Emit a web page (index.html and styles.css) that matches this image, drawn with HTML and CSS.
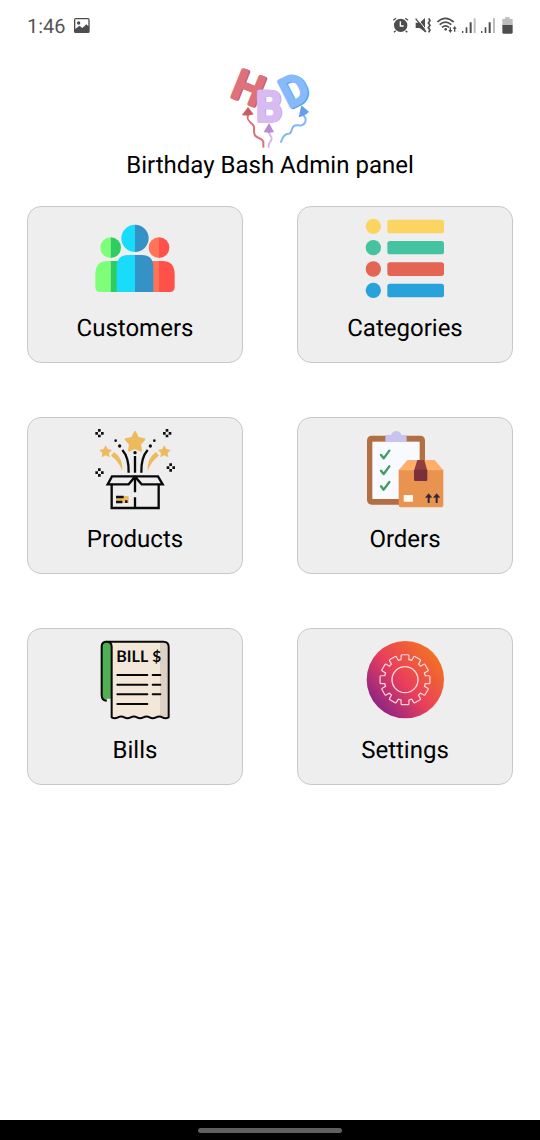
FILE: index.html
```html
<!DOCTYPE html>
<html lang="en">

<head>
    <meta charset="UTF-8">
    <meta name="viewport" content="width=device-width, initial-scale=1.0">
    <title>Birthday Bash Admin panel</title>
    <link rel="stylesheet" href="styles.css">
</head>

<body>

    <div class="status-bar">
        <span class="time">1:46</span>
        <svg class="status-icon" width="17" height="18" viewBox="188 36 51 54">
            <path fill-rule="evenodd" d="M193 39h37q5 0 5 5v36q0 4-5 4h-37q-5 0-5-4V44q0-5 5-5zM192 43v29l12-10 9 7 12-11 6 6V43zM202 49a5 5 0 1 1 0 10 5 5 0 0 1 0-10z" />
        </svg>
        <div class="status-right">
            <svg class="status-icon" width="18" height="18" viewBox="36 36 54 54">
                <path d="M40 46l8-6M84 46l-8-6M47 77l-5 5M77 77l5 5" fill="none" stroke="#4d4d4d" stroke-width="4" />
                <circle cx="62" cy="61" r="20" />
                <path d="M61 49v14h10" fill="none" stroke="#fff" stroke-width="4" />
            </svg>
            <svg class="status-icon" width="17" height="18" viewBox="105 36 51 54">
                <path d="M107 53h12l16-14v42l-16-12h-12z" />
                <path d="M110 38l31 40" stroke="#fff" stroke-width="3" />
                <path d="M107 41l31 40" stroke="#4d4d4d" stroke-width="4" />
                <path d="M146 40l4 7-5 7 5 7-5 7 5 7-4 7" fill="none" stroke="#4d4d4d" stroke-width="5" />
            </svg>
            <svg class="status-icon" width="20" height="18" viewBox="171 36 60 54">
                <path d="M172 51q24-22 49 0M179 59q17-15 35 0M186 67q10-9 21 0" fill="none" stroke="#4d4d4d" stroke-width="5" />
                <circle cx="197" cy="73" r="4" />
                <path d="M209 67h4v8h4l-6 9-6-9h4zM222 80h4v-9h4l-6-8-6 8h4z" />
            </svg>
            <svg class="status-icon" width="14" height="18" viewBox="246 36 42 54">
                <path d="M246 78h4v6h-4zM257 67h5v17h-5zM269 52h6v32h-6z" />
                <path class="faded" d="M281 40h6v44h-6z" />
            </svg>
            <svg class="status-icon" width="14" height="18" viewBox="303 36 42 54">
                <path d="M303 78h4v6h-4zM314 67h5v17h-5zM326 52h6v32h-6z" />
                <path class="faded" d="M339 40h6v44h-6z" />
            </svg>
            <svg class="status-icon" width="13" height="18" viewBox="360 36 39 54">
                <path class="faded" d="M367 42h8v-5h14v5h9v18h-31z" />
                <path d="M367 60h31v22q0 4-4 4h-23q-4 0-4-4z" />
            </svg>
        </div>
    </div>

    <div class="header">
        <!-- balloon letters -->
        <svg class="logo" viewBox="30 24 240 240" role="img" aria-label="HBD">
            <g fill="none" stroke-width="6" stroke-linecap="round">
                <path d="M84 166c-6 18 10 20 16 30s-2 20 5 30 20 8 25 18v16" stroke="#dc6f78" />
                <path d="M148 212c-6 10 8 14 7 24s-12 14-9 25" stroke="#d5b8ee" />
                <path d="M252 168c10 10 4 25-7 28s-15-5-24 3-4 22-15 22-18 8-23 25" stroke="#82b7f8" />
            </g>
            <text class="letter" x="0" y="0" font-size="122" transform="translate(32 108) rotate(22)" fill="#cb5c66" stroke="#cb5c66">H</text>
            <text class="letter" x="0" y="0" font-size="122" transform="translate(28 107) rotate(22)" fill="#de717b" stroke="#de717b">H</text>
            <path d="M84 141l17 22q-17 6-35 2z" fill="#cb5c66" />
            <text class="letter" x="110" y="184" font-size="124" fill="#c5a5e3" stroke="#c5a5e3">B</text>
            <text class="letter" x="107" y="184" font-size="124" fill="#d8bcf1" stroke="#d8bcf1">B</text>
            <path d="M147 189l15 27q-15 4-31 0z" fill="#b88bd5" />
            <text class="letter" x="0" y="0" font-size="118" transform="translate(211 146) rotate(-27)" fill="#669fe9" stroke="#669fe9">D</text>
            <text class="letter" x="0" y="0" font-size="118" transform="translate(206 144) rotate(-27)" fill="#85bbfb" stroke="#85bbfb">D</text>
            <path d="M244 136l23 19q-12 13-31 17z" fill="#669fe9" />
        </svg>
        <h1>Birthday Bash Admin panel</h1>
    </div>

    <div class="menu">
        <button class="card" type="button">
            <svg class="card-icon" viewBox="30 12 240 240">
                <path d="M77 67a31 31 0 0 0 0 62z" fill="#7eff78" />
                <path d="M77 67a31 31 0 0 1 0 62z" fill="#2fcc62" />
                <path d="M77 138h-8q-38 0-38 40v38q0 15 15 15h31z" fill="#7eff78" />
                <path d="M77 138h29v93H77z" fill="#2fcc62" />
                <path d="M222 67a31 31 0 0 0 0 62z" fill="#ff7458" />
                <path d="M222 67a31 31 0 0 1 0 62z" fill="#ff5149" />
                <path d="M194 138h28v93h-28z" fill="#ff7458" />
                <path d="M222 138h9q38 0 38 40v38q0 15-15 15h-32z" fill="#ff5149" />
                <path d="M150 29a41 41 0 0 0 0 82z" fill="#19dcfb" />
                <path d="M150 29a41 41 0 0 1 0 82z" fill="#3592c7" />
                <path d="M150 120h-20q-35 0-35 36v75h55z" fill="#19dcfb" />
                <path d="M150 120h20q35 0 35 36v75h-55z" fill="#3592c7" />
            </svg>
            <span>Customers</span>
        </button>

        <button class="card" type="button">
            <svg class="card-icon" viewBox="30 27 240 240">
                <g fill="#fbd462">
                    <circle cx="55" cy="49" r="23" />
                    <rect x="97" y="29" width="170" height="41" rx="8" />
                </g>
                <g fill="#45c3a0">
                    <circle cx="55" cy="113" r="23" />
                    <rect x="97" y="93" width="170" height="40" rx="8" />
                </g>
                <g fill="#e46553">
                    <circle cx="55" cy="177" r="23" />
                    <rect x="97" y="157" width="170" height="41" rx="8" />
                </g>
                <g fill="#27a2db">
                    <circle cx="55" cy="241" r="23" />
                    <rect x="97" y="221" width="170" height="41" rx="8" />
                </g>
            </svg>
            <span>Categories</span>
        </button>

        <button class="card" type="button">
            <svg class="card-icon" viewBox="30 30 240 240">
                <g fill="#edbb5e">
                    <path d="M150 36l9 18 19 4-13 15 3 19-18-8-18 8 3-19-13-15 19-4z" stroke="#edbb5e" stroke-width="6" stroke-linejoin="round" />
                    <path d="M62 76l6 11 13 3-9 9 2 13-12-6-12 6 2-13-9-9 13-3z" />
                    <path d="M238 76l6 11 13 3-9 9 2 13-12-6-12 6 2-13-9-9 13-3z" />
                    <path d="M78 107l9-11q28 20 25 56-12-30-34-45z" />
                    <path d="M222 107l-9-11q-28 20-25 56 12-30 34-45z" />
                </g>
                <!-- sparkles -->
                <g fill="none" stroke="#111" stroke-width="8" stroke-dasharray="8 9">
                    <path d="M43 27v25M31 40h25" />
                    <path d="M246 27v25M234 40h25" />
                    <path d="M43 145v25M31 158h25" />
                    <path d="M257 130v25M245 143h25" />
                </g>
                <g fill="#111">
                    <circle cx="92" cy="62" r="4" />
                    <circle cx="104" cy="78" r="5" />
                    <circle cx="208" cy="62" r="4" />
                    <circle cx="196" cy="78" r="5" />
                    <circle cx="150" cy="98" r="5" />
                </g>
                <g fill="none" stroke="#090909" stroke-width="7">
                    <path d="M112 90q20 22 19 68M188 90q-20 22-19 68M150 108v50" />
                    <path d="M80 191v73h141v-73M150 175v42M150 232v32" />
                    <path d="M81 169h138l14 24h-63l-20-23-19 23H68z" />
                </g>
                <path d="M93 228h38v21H93z" fill="#edbb5e" />
                <path d="M93 231h23M93 246h19M124 241v8" stroke="#111" stroke-width="7" />
            </svg>
            <span>Products</span>
        </button>

        <button class="card" type="button">
            <svg class="card-icon" viewBox="30 30 240 240">
                <rect x="36" y="47" width="174" height="207" rx="14" fill="#b26f43" />
                <rect x="52" y="65" width="142" height="172" fill="#f7fafe" />
                <path d="M91 66V52q0-7 7-7h10q5-12 16-12t16 12h8q7 0 7 7v14z" fill="#c8c4ef" />
                <path d="M78 105l8 10 17-23M78 152l8 10 17-23M78 199l8 10 17-23" fill="none" stroke="#439a65" stroke-width="7" stroke-linecap="round" stroke-linejoin="round" />
                <path d="M131 149h134v105q0 8-8 8H139q-8 0-8-8z" fill="#e99350" />
                <path d="M131 151l26-31h82l26 31z" fill="#ffaf6b" />
                <path d="M187 120h21l9 32h-40z" fill="#913e3f" />
                <path d="M177 149h40v30q0 4-4 4h-32q-4 0-4-4z" fill="#7a3038" />
                <rect x="146" y="225" width="28" height="20" rx="2" fill="#fffaf0" />
                <path d="M221 249v-22M245 249v-22" stroke="#30283a" stroke-width="6" />
                <path d="M212 232l9-11 9 11zM236 232l9-11 9 11z" fill="#30283a" stroke="#30283a" stroke-width="2" />
            </svg>
            <span>Orders</span>
        </button>

        <button class="card" type="button">
            <svg class="card-icon" viewBox="15 32 240 240">
                <path d="M50 211q-15-2-15-18V48q0-14 15-14t15 16v155H50z" fill="#50af50" />
                <path d="M48 211q-13-2-13-18V48q0-14 15-14" fill="none" stroke="#080808" stroke-width="6" stroke-linecap="round" />
                <path d="M50 34h170q16 0 16 16v211q-10 5-19 0t-19 0-19 0-19 0-19 0-19 0-19 0-19 0-19 0V50q0-16-15-16z" fill="#f3e7da" />
                <path d="M210 37h10q13 0 13 13v208q-12 4-23-2z" fill="#ddd0c5" />
                <path d="M50 34h170q16 0 16 16v211q-10 5-19 0t-19 0-19 0-19 0-19 0-19 0-19 0-19 0-19 0V50q0-16-15-16z" fill="none" stroke="#080808" stroke-width="6" stroke-linejoin="round" />
                <text class="bill-text" x="79" y="95" font-size="48">BILL</text>
                <text class="bill-text" x="187" y="94" font-size="46">$</text>
                <path d="M82 134h90M188 134h23M82 163h90M188 163h23M82 192h90M188 192h23M82 221h90" stroke="#080808" stroke-width="6" stroke-linecap="round" />
            </svg>
            <span>Bills</span>
        </button>

        <button class="card" type="button">
            <svg class="card-icon" viewBox="30 32 240 240">
                <defs>
                    <linearGradient id="sunset" x1="0.1" y1="0.9" x2="0.9" y2="0.2">
                        <stop offset="0" stop-color="#83218a" />
                        <stop offset="0.5" stop-color="#e93f5a" />
                        <stop offset="1" stop-color="#f27024" />
                    </linearGradient>
                    <g id="gear">
                        <circle cx="150" cy="148" r="60" />
                        <rect id="teeth" x="140" y="75" width="20" height="146" rx="1" />
                        <use href="#teeth" transform="rotate(30 150 148)" />
                        <use href="#teeth" transform="rotate(60 150 148)" />
                        <use href="#teeth" transform="rotate(90 150 148)" />
                        <use href="#teeth" transform="rotate(120 150 148)" />
                        <use href="#teeth" transform="rotate(150 150 148)" />
                    </g>
                    <!-- only the outline of the gear stays visible -->
                    <mask id="gear-outline" maskUnits="userSpaceOnUse" x="30" y="32" width="240" height="240">
                        <use href="#gear" fill="#fff" stroke="#fff" stroke-width="7" />
                        <use href="#gear" fill="#000" />
                    </mask>
                </defs>
                <circle cx="151" cy="148" r="116" fill="url(#sunset)" />
                <rect x="60" y="60" width="180" height="180" fill="#ffd9df" mask="url(#gear-outline)" />
                <circle cx="150" cy="148" r="39" fill="none" stroke="#ffd9df" stroke-width="4" />
            </svg>
            <span>Settings</span>
        </button>
    </div>

    <div class="nav-bar">
        <div class="nav-handle"></div>
    </div>

</body>

</html>
```
FILE: styles.css
```css
* {
    box-sizing: border-box;
}

body {
    display: flex;
    flex-direction: column;
    min-height: 100vh;
    margin: 0;
    background-color: #fff;
    color: #000;
    font-family: Roboto, sans-serif;
    text-rendering: geometricPrecision;
}

.status-bar {
    display: flex;
    align-items: center;
    gap: 8px;
    height: 52px;
    padding: 0 27px;
    color: #555;
}

.time {
    font-size: 20px;
}

.status-icon {
    fill: #4d4d4d;
    overflow: visible;
}

.faded {
    fill: #bdbdbd;
}

.status-right {
    display: flex;
    gap: 5px;
    margin-left: auto;
}

.header {
    display: flex;
    flex-direction: column;
    align-items: center;
    gap: 3px;
    padding-top: 16px;
}

.logo {
    width: 80px;
    height: 80px;
    overflow: visible;
}

.letter {
    font-family: Roboto, sans-serif;
    font-weight: 400;
    stroke-width: 12px;
    stroke-linejoin: round;
}

h1 {
    margin: 0;
    font-size: 24px;
    font-weight: 400;
    line-height: 28px;
}

.menu {
    display: grid;
    grid-template-columns: 1fr 1fr;
    gap: 54px;
    padding: 27px;
}

.card {
    display: flex;
    flex-direction: column;
    align-items: center;
    gap: 15px;
    padding: 12px 12px 20px;
    border: 1px solid #c8c8c8;
    border-radius: 14px;
    background-color: #eee;
    color: #000;
    font-family: inherit;
    font-size: 24px;
    line-height: 28px;
    text-rendering: inherit;
    cursor: pointer;
}

.card-icon {
    width: 80px;
    height: 80px;
    overflow: visible;
}

.bill-text {
    font-family: Lato, sans-serif;
    font-weight: 700;
    fill: #080808;
}

.nav-bar {
    display: flex;
    align-items: center;
    justify-content: center;
    height: 20px;
    margin-top: auto;
    background-color: #000;
}

.nav-handle {
    width: 144px;
    height: 5px;
    border-radius: 3px;
    background-color: #606060;
}
```
